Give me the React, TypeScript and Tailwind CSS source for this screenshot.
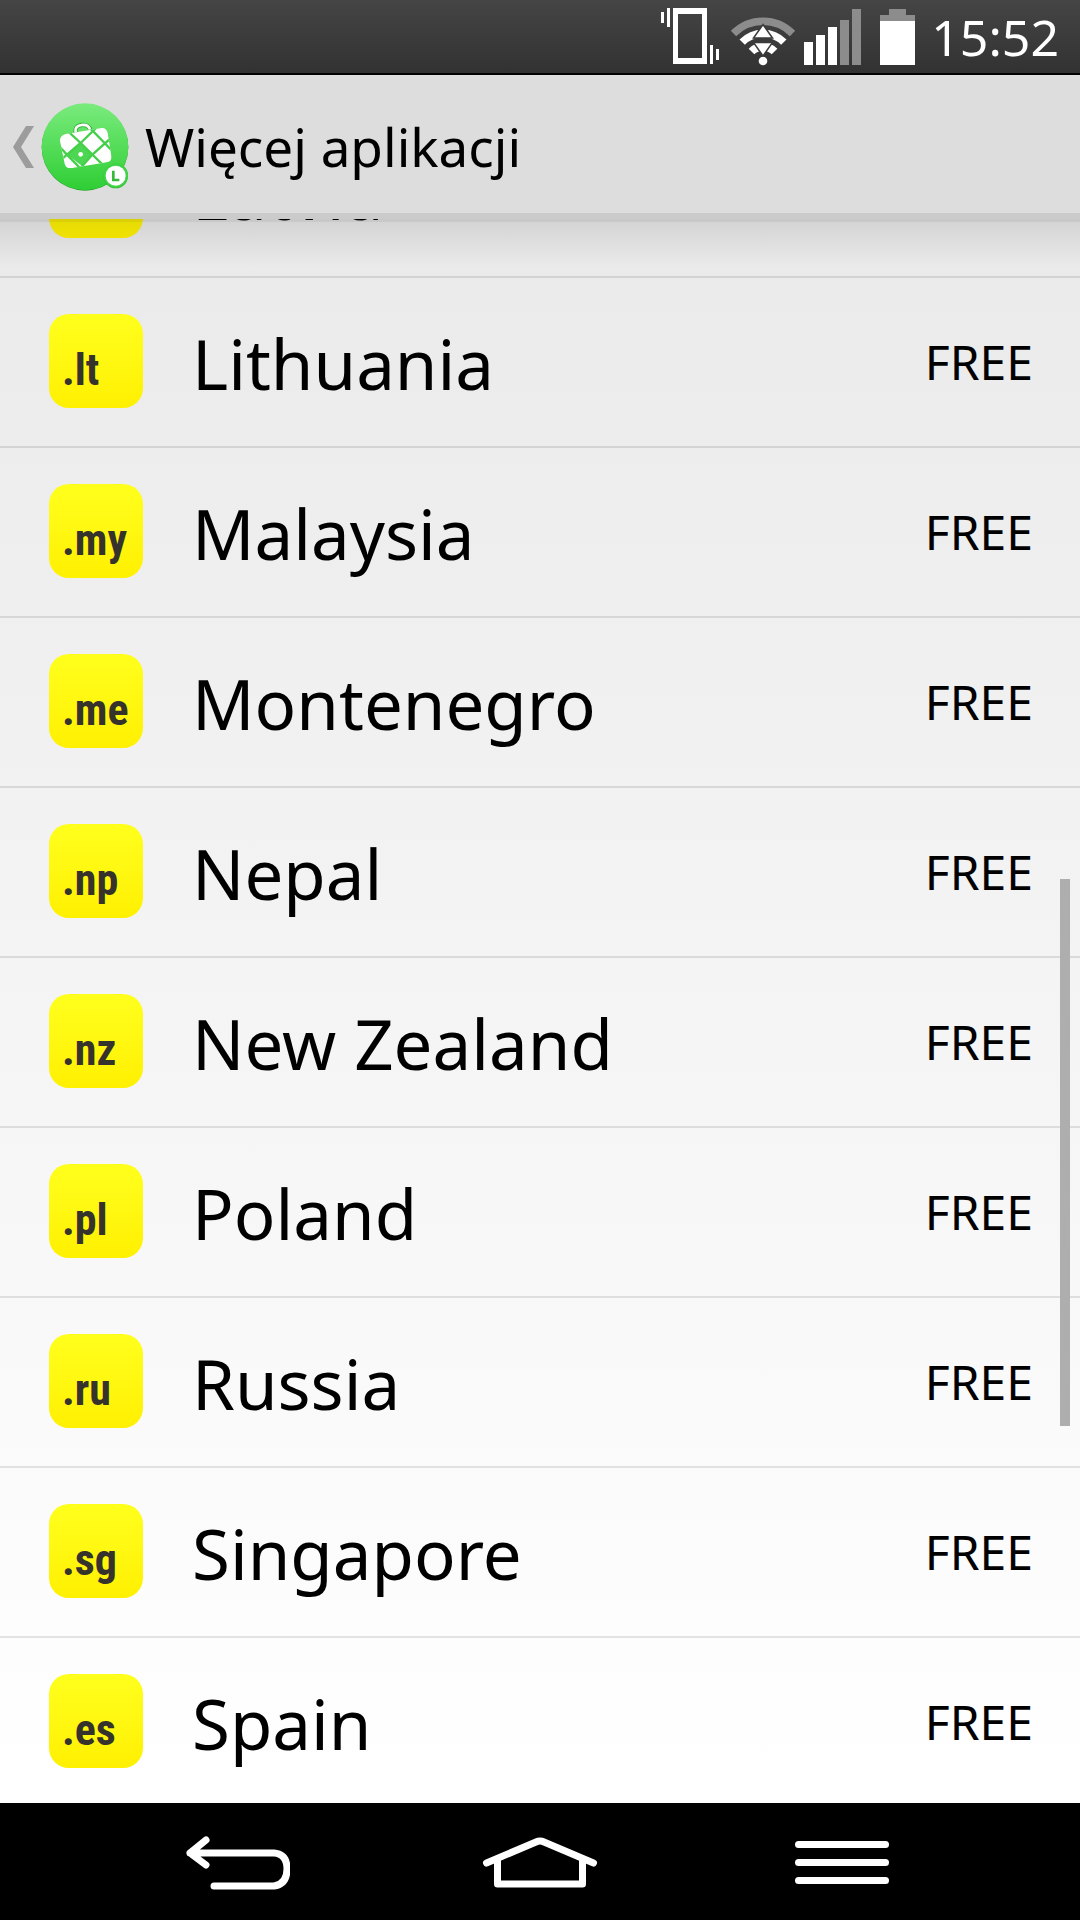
import React from 'react';

interface Country {
    tld: string;
    name: string;
}

const countries: Country[] = [
    { tld: ".lv", name: "Latvia" },
    { tld: ".lt", name: "Lithuania" },
    { tld: ".my", name: "Malaysia" },
    { tld: ".me", name: "Montenegro" },
    { tld: ".np", name: "Nepal" },
    { tld: ".nz", name: "New Zealand" },
    { tld: ".pl", name: "Poland" },
    { tld: ".ru", name: "Russia" },
    { tld: ".sg", name: "Singapore" },
    { tld: ".es", name: "Spain" },
];

/*
    Status bar icons
*/
function VibrateIcon() {
    return (
        <svg width="58" height="57" viewBox="0 0 58 57" fill="#fff">
            <rect x="0" y="4" width="3" height="11" />
            <rect x="6" y="0" width="3" height="19" />
            <path fillRule="evenodd" d="M12 0h34v56H12zM17 6v44h24V6z" />
            <rect x="49" y="37" width="3" height="19" />
            <rect x="55" y="41" width="3" height="11" />
        </svg>
    );
}

function WifiIcon() {
    return (
        <svg width="66" height="50" viewBox="0 0 66 50" fill="none">
            <path d="M3.5 17.5A41.5 41.5 0 0 1 62.5 17.5" stroke="#8c8c8c" strokeWidth="7.5" />
            <path d="M12.2 26.2A29.2 29.2 0 0 1 53.8 26.2" stroke="#fff" strokeWidth="7.5" />
            <path d="M21.5 35.5A16.2 16.2 0 0 1 44.5 35.5" stroke="#fff" strokeWidth="8" />
            <circle cx="33" cy="45" r="4.3" fill="#fff" />
            <path d="M33 8.5L42.5 22h-19zM23.5 26.5h19L33 40z" fill="#fff" stroke="#3b3b3b" strokeWidth="1.5" />
            <rect x="24" y="22.5" width="18" height="3.5" fill="#3b3b3b" />
        </svg>
    );
}

function SignalIcon() {
    return (
        <svg width="57" height="56" viewBox="0 0 57 56" fill="#fff">
            <rect x="0" y="33" width="9" height="23" />
            <rect x="12" y="26" width="9" height="30" />
            <rect x="24" y="18" width="9" height="38" />
            <rect x="36" y="11" width="9" height="45" fill="#8c8c8c" />
            <rect x="48" y="0" width="9" height="56" fill="#8c8c8c" />
        </svg>
    );
}

function BatteryIcon() {
    return (
        <svg width="35" height="56" viewBox="0 0 35 56">
            <path d="M9 0h17v6h9v6H0V6h9z" fill="#8c8c8c" />
            <rect x="0" y="12" width="35" height="44" fill="#fff" />
        </svg>
    );
}

/*
    Green suitcase logo with the small L badge
*/
function AppLogo() {
    return (
        <svg width="88" height="88" viewBox="34 38 264 264">
            <defs>
                <linearGradient id="logo_green" x1="0" y1="0" x2="0" y2="1">
                    <stop offset="0" stopColor="#7aeb7d" />
                    <stop offset="1" stopColor="#2fce35" />
                </linearGradient>
                <clipPath id="suitcase_body">
                    <path d="M108 131L212 114Q229 110 234 128L245 196Q248 213 231 216L128 233Q110 237 105 220L91 152Q90 136 108 131z" />
                </clipPath>
            </defs>
            <circle cx="166" cy="171" r="130" fill="#25a52b" />
            <circle cx="166" cy="169" r="130" fill="url(#logo_green)" />
            <circle cx="258" cy="257" r="37" fill="#2bb531" />
            <circle cx="258" cy="255" r="37" fill="#3fd345" />
            <path d="M138 128Q134 107 155 104Q177 101 182 119" fill="none" stroke="#2fae36" strokeWidth="13" />
            <path d="M138 126Q134 107 155 104Q177 101 181 118" fill="none" stroke="#fff" strokeWidth="8" />
            <g clipPath="url(#suitcase_body)">
                <rect x="85" y="105" width="170" height="135" fill="#fff" />
                <path d="M153 158L189 192L158 228L111 192z" fill="#4cd652" />
                <path
                    d="M200 112L153 158L98 205M245 142L189 192L150 236M112 120L153 158L230 234M85 164L111 192L158 240M182 114L252 186"
                    fill="none"
                    stroke="#45cf4b"
                    strokeWidth="7"
                />
                <circle cx="153" cy="192" r="7" fill="#fff" />
            </g>
            <circle cx="258" cy="256" r="30" fill="#fff" />
            <path d="M251 241V269H269" fill="none" stroke="#36b83c" strokeWidth="8" />
        </svg>
    );
}

function StatusBar() {
    return (
        <div className="flex h-[75px] shrink-0 items-start justify-end border-b-2 border-black bg-linear-to-b from-[#454545] to-[#323232] pt-2 pr-[21px]">
            <VibrateIcon />
            <div className="mt-2 ml-[11px]">
                <WifiIcon />
            </div>
            <div className="mt-px ml-2">
                <SignalIcon />
            </div>
            <div className="mt-px ml-[19px]">
                <BatteryIcon />
            </div>
            <p className="ml-4 text-[50px] leading-[58px] text-white">15:52</p>
        </div>
    );
}

function Header() {
    return (
        <header className="flex h-36 shrink-0 items-center border-b-[6px] border-[#cbcbcb] bg-[#dddddd] pt-1.5 pl-[13px]">
            <button aria-label="Back" className="flex items-center gap-[7px]">
                <svg width="21" height="42" viewBox="0 0 21 42" fill="#9c9c9c">
                    <path d="M13 0h8L8 21l13 21h-8L0 21z" />
                </svg>
                <AppLogo />
            </button>
            <h1 className="ml-4 text-[53px] leading-[64px]">Więcej aplikacji</h1>
        </header>
    );
}

function CountryRow({ country }: { country: Country }) {
    return (
        <li className="flex h-[170px] items-center border-b-2 border-black/10 pr-[47px] pb-0.5 pl-[49px]">
            <div className="h-[94px] w-[94px] shrink-0 rounded-[20px] bg-linear-to-b from-[#ffff1c] to-[#fff000] pt-6 pl-[13px] font-['Roboto_Condensed','Liberation_Sans_Narrow','Roboto',sans-serif] text-[44px] leading-[64px] font-bold text-[#35332c]">
                {country.tld}
            </div>
            <p className="mt-1 ml-[49px] grow text-[69px] leading-[84px]">{country.name}</p>
            <p className="mt-0.5 text-[48px] leading-[60px]">FREE</p>
        </li>
    );
}

function NavBar() {
    return (
        <nav className="grid h-[117px] shrink-0 grid-cols-3 bg-black px-[87px] pt-0.5">
            <button aria-label="Back" className="flex items-center justify-center">
                <svg width="104" height="54" viewBox="0 0 104 54" fill="none" stroke="#fff" strokeLinecap="round" strokeLinejoin="round" strokeWidth="7">
                    <path d="M20 4L4 17L20 29M4 17H88Q101 18 101 33T88 50H28" />
                </svg>
            </button>
            <button aria-label="Home" className="flex items-center justify-center">
                <svg width="116" height="52" viewBox="0 0 116 52" fill="none" stroke="#fff" strokeLinecap="round" strokeLinejoin="round" strokeWidth="7">
                    <path d="M4.5 26L54 5Q58 3 62 5L111.5 26" />
                    <path d="M15.5 24V47H100.5V24" />
                </svg>
            </button>
            <button aria-label="Menu" className="flex flex-col items-center justify-center gap-[11px]">
                <span className="h-[7px] w-[94px] rounded-full bg-white" />
                <span className="h-[7px] w-[94px] rounded-full bg-white" />
                <span className="h-[7px] w-[94px] rounded-full bg-white" />
            </button>
        </nav>
    );
}

export default function App() {
    return (
        <div className="flex h-screen flex-col overflow-hidden bg-white font-['Noto_Sans',sans-serif] text-black">
            <StatusBar />
            <Header />
            <main className="relative min-h-0 grow overflow-hidden bg-linear-to-b from-[#eaeaea] to-white">
                {/* list is scrolled, so the first row is mostly under the header */}
                <ul className="-mt-[111px]">
                    {countries.map((country) => (
                        <CountryRow key={country.tld} country={country} />
                    ))}
                </ul>
                <div className="absolute inset-x-0 top-0 h-[3px] bg-black/5" />
                <div className="absolute inset-x-0 top-0 h-12 bg-linear-to-b from-black/10 to-transparent" />
                <div className="absolute top-[660px] right-[10px] h-[547px] w-[10px] bg-[#aeaeae]" />
            </main>
            <NavBar />
        </div>
    );
}
